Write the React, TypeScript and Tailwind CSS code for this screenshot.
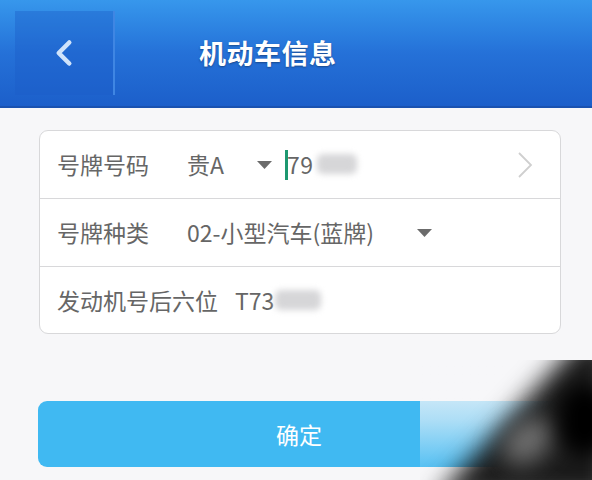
import { ChevronLeft } from 'lucide-react';

function Caret() {
  return (
    <svg width="15" height="8" viewBox="0 0 15 8" className="shrink-0">
      <path d="M0 0 H15 L7.5 8 Z" fill="#6b6b6b" />
    </svg>
  );
}

function Blurred({ w }: { w: number }) {
  return (
    <span
      className="inline-block h-[20px] rounded-[6px] bg-[#d6d6d8] blur-[3px]"
      style={{ width: w }}
    />
  );
}

export default function App() {
  return (
    <div className="relative w-[592px] h-[480px] overflow-hidden bg-[#f7f7f9] font-['Noto_Sans_CJK_SC','Noto_Sans',sans-serif]">
      {/* Header */}
      <header className="h-[108px] bg-gradient-to-b from-[#3797ec] via-[#2571d8] to-[#1c5fca] border-b-2 border-[#1a52b0] flex items-center pl-[15px]">
        <button className="w-[100px] h-[84px] bg-[#1b5cc8]/40 border-r-2 border-[#3f86e3] flex items-center justify-center">
          <ChevronLeft className="w-[42px] h-[42px] text-[#cfe3fb]" strokeWidth={2.6} />
        </button>
        <h1 className="ml-[84px] text-white text-[27px] font-bold tracking-[0.5px] [text-shadow:0_1px_2px_rgba(0,0,0,0.35)]">
          机动车信息
        </h1>
      </header>

      {/* Form */}
      <div className="mt-[22px] ml-[39px] w-[522px] bg-white border border-[#d8d8da] rounded-[9px] text-[23px] text-[#666666]">
        <div className="h-[68px] flex items-center pl-[17px] pr-[27px] border-b border-[#d8d8da]">
          <span className="w-[130px] shrink-0">号牌号码</span>
          <span className="w-[70px] shrink-0">贵A</span>
          <Caret />
          <span className="ml-[13px] w-[3px] h-[30px] bg-[#1d9870]" />
          <span className="-ml-[1px] tracking-[0.5px]">79</span>
          <span className="ml-[3px]"><Blurred w={40} /></span>
          <svg width="16" height="28" viewBox="0 0 16 28" className="ml-auto">
            <path d="M2 2 L14 14 L2 26" fill="none" stroke="#cfcfcf" strokeWidth="1.8" />
          </svg>
        </div>
        <div className="h-[68px] flex items-center pl-[17px] border-b border-[#d8d8da]">
          <span className="w-[130px] shrink-0">号牌种类</span>
          <span>02-小型汽车(蓝牌)</span>
          <span className="ml-[43px]"><Caret /></span>
        </div>
        <div className="h-[66px] flex items-center pl-[17px]">
          <span>发动机号后六位</span>
          <span className="ml-[17px]">T73</span>
          <span className="ml-[1px]"><Blurred w={46} /></span>
        </div>
      </div>

      {/* Submit */}
      <button className="mt-[67px] ml-[38px] w-[522px] h-[66px] rounded-[9px] bg-[#40b9f2] text-white text-[23px] flex items-center justify-center">
        确定
      </button>

      {/* Watermark overlay */}
      <div className="absolute left-[420px] top-[360px] w-[172px] h-[120px] overflow-hidden pointer-events-none">
        <div className="absolute inset-0 bg-gradient-to-b from-[#f7f7f9] via-[#f7f7f9]/60 to-transparent" />
        <div className="absolute inset-0 blur-[12px]">
          <div className="absolute inset-[-20px] bg-[#1a1a1a] [clip-path:polygon(180px_0px,240px_0px,240px_180px,15px_180px)]" />
        </div>
        <div className="absolute left-[80px] top-[62px] w-[55px] h-[38px] bg-[#707070] rotate-[-40deg] blur-[12px] rounded-full" />
        <div className="absolute left-[140px] top-[25px] w-[50px] h-[70px] bg-black blur-[10px] rounded-full" />
      </div>
    </div>
  );
}
